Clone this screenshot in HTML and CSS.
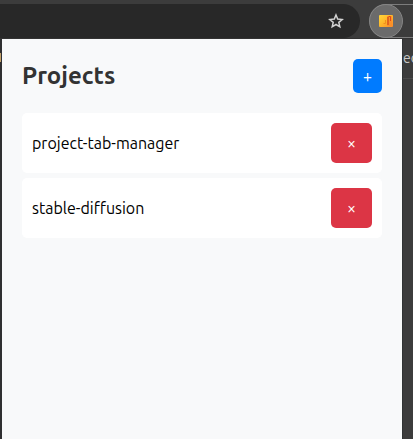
FILE: index.html
```html
<!DOCTYPE html>
<html lang="en">
<head>
<meta charset="utf-8">
<title>Projects</title>
<link rel="stylesheet" href="styles.css">
</head>
<body>
<header class="toolbar">
  <div class="omnibox">
    <button class="star" type="button" aria-label="Bookmark">
      <svg width="16" height="16" viewBox="0 0 16 16" fill="none" stroke="#d2d2d2" stroke-width="1.5"><path d="M8 2 L9.7 6.1 L14.2 6.5 L10.8 9.4 L11.8 13.8 L8 11.5 L4.2 13.8 L5.2 9.4 L1.8 6.5 L6.3 6.1 Z"/></svg>
    </button>
  </div>
  <div class="extensions">
    <button class="extension" type="button" aria-label="Project manager">
      <svg width="14" height="12" viewBox="0 0 14 12">
        <defs><linearGradient id="folder" x1="0" y1="0" x2="1" y2="1"><stop offset="0" stop-color="#ffd83a"/><stop offset=".5" stop-color="#ffb529"/><stop offset="1" stop-color="#fb8a2a"/></linearGradient></defs>
        <rect width="14" height="12" rx="1" fill="url(#folder)"/>
        <path d="M8 1H13V11H8Z" fill="#fa8a2a" opacity=".7"/>
        <path d="M9 2V10" fill="none" stroke="#d8551a" stroke-width="1.5"/>
        <path d="M9.5 1.5H11.5V6" fill="none" stroke="#de4a18"/>
        <path d="M4.5 8.5H6.5V5" fill="none" stroke="#f0901c"/>
      </svg>
    </button>
  </div>
</header>
<div class="window">
  <div class="edge-left"><span class="favicon"></span></div>
  <main class="popup">
    <div class="heading">
      <h1>Projects</h1>
      <button class="add" type="button" aria-label="Add project">+</button>
    </div>
    <ul class="projects">
      <li><span>project-tab-manager</span><button class="remove" type="button" aria-label="Remove project-tab-manager">×</button></li>
      <li><span>stable-diffusion</span><button class="remove" type="button" aria-label="Remove stable-diffusion">×</button></li>
    </ul>
  </main>
  <div class="edge-right"><div class="bookmark">ec</div></div>
</div>
</body>
</html>
```
FILE: styles.css
```css
* { box-sizing: border-box; }
body {
  margin: 0;
  min-height: 100vh;
  display: flex;
  flex-direction: column;
  background: #3c3c3c;
  font-family: Ubuntu, "Noto Sans", sans-serif;
  font-size: 16px;
  overflow: hidden;
}
button { border: 0; padding: 0; font: inherit; cursor: pointer; }
svg { display: block; }
.toolbar {
  display: flex;
  gap: 9px;
  padding-top: 4px;
  height: 39px;
  border-bottom: 1px solid #333;
}
.omnibox {
  flex: 1;
  display: flex;
  align-items: center;
  justify-content: flex-end;
  padding-right: 16px;
  background: #282828;
  border-radius: 0 17px 17px 0;
}
.star { background: none; }
.extensions {
  display: flex;
  width: 44px;
  border-top: 1px solid #7c7c7c;
  border-bottom: 1px solid #7c7c7c;
  border-radius: 17px 0 0 17px;
}
.extension {
  display: grid;
  place-items: center;
  width: 34px;
  height: 34px;
  margin: -1px 0;
  border: 1px solid #858585;
  border-radius: 50%;
  background: #6b6b6b;
}
.window { flex: 1; display: flex; }
.edge-left { width: 2px; padding-top: 14px; background: #2f2f31; }
.favicon { display: block; width: 1px; height: 9px; background: #c2a16a; }
.popup { flex: 1; padding: 20px; background: #f8f9fa; }
.edge-right {
  width: 11px;
  border-left: 1px solid #303334;
  overflow: hidden;
}
.bookmark {
  height: 40px;
  border-bottom: 1px solid #4b4b4b;
  color: #c7c7c7;
  font-size: 14px;
  line-height: 38px;
}
.heading {
  display: flex;
  align-items: flex-start;
  justify-content: space-between;
  margin-bottom: 20px;
}
h1 {
  margin: 0;
  color: #333;
  font-size: 24px;
  font-weight: 600;
  line-height: 34px;
}
.add, .remove { border-radius: 5px; color: #fff; }
.add { width: 29px; height: 34px; background: #007bff; font-size: 16px; }
.projects {
  display: grid;
  gap: 5px;
  margin: 0;
  padding: 0;
  list-style: none;
}
.projects li {
  display: flex;
  align-items: center;
  justify-content: space-between;
  padding: 10px;
  border-radius: 5px;
  background: #fff;
  color: #000;
}
.remove { width: 41px; height: 40px; background: #dc3545; font-size: 16px; }
```
